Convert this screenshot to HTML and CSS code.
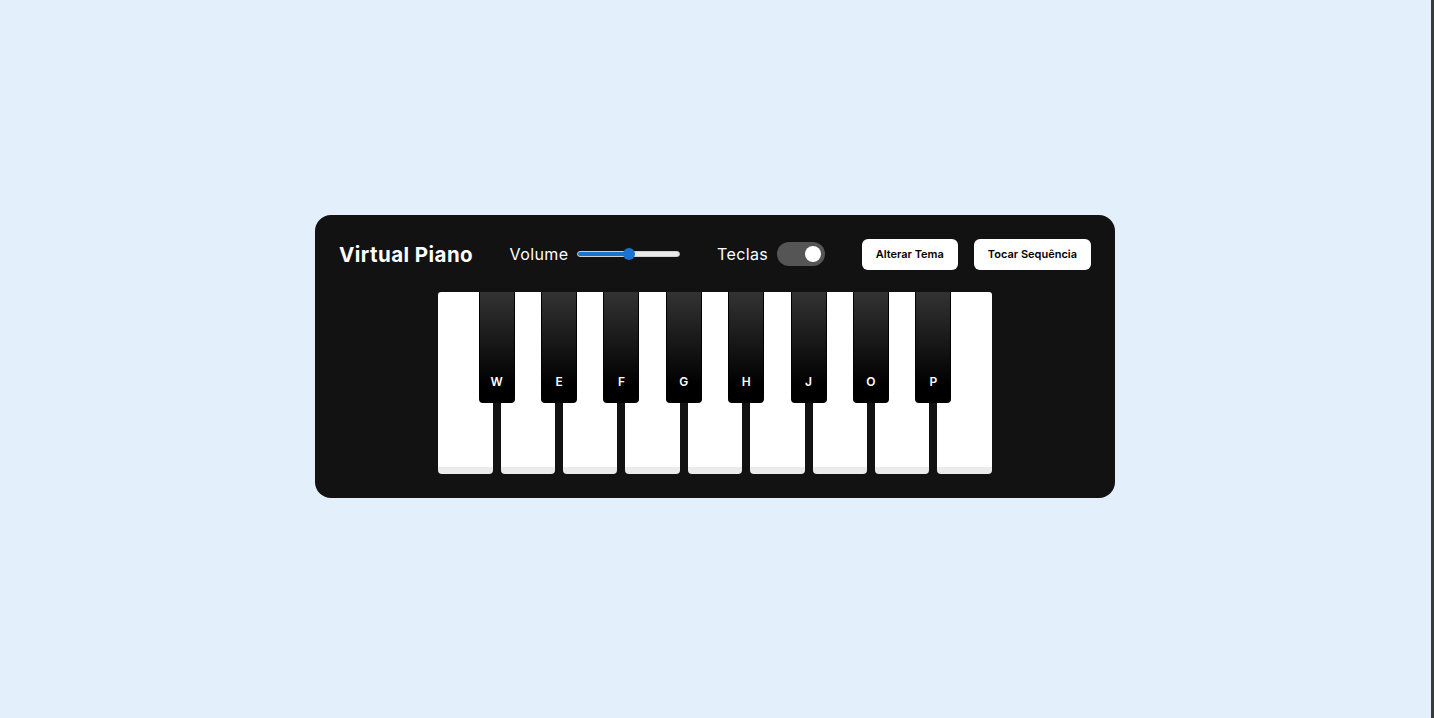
FILE: index.html
```html
<!DOCTYPE html>
<html lang="pt">
<head>
<meta charset="utf-8">
<title>Virtual Piano</title>
<link rel="stylesheet" href="styles.css">
</head>
<body>
<main class="piano-card">
  <header class="toolbar">
    <h1 class="title">Virtual Piano</h1>
    <label class="control">
      <span>Volume</span>
      <input class="volume" type="range" min="0" max="100" value="50">
    </label>
    <div class="control">
      <span>Teclas</span>
      <span class="toggle"><span class="knob"></span></span>
    </div>
    <div class="buttons">
      <button class="btn">Alterar Tema</button>
      <button class="btn">Tocar Sequência</button>
    </div>
  </header>
  <div class="keys">
    <div class="white"><div class="black"><span>W</span></div></div>
    <div class="white"><div class="black"><span>E</span></div></div>
    <div class="white"><div class="black"><span>F</span></div></div>
    <div class="white"><div class="black"><span>G</span></div></div>
    <div class="white"><div class="black"><span>H</span></div></div>
    <div class="white"><div class="black"><span>J</span></div></div>
    <div class="white"><div class="black"><span>O</span></div></div>
    <div class="white"><div class="black"><span>P</span></div></div>
    <div class="white"></div>
  </div>
</main>
</body>
</html>
```

FILE: styles.css
```css
* { box-sizing: border-box; }
html { background: #e3f0fb; }
body {
  margin: 0;
  min-height: 100vh;
  border-right: 3px solid #3a3a3a;
  background: #e3f0fb;
  display: flex;
  align-items: center;
  justify-content: center;
  font-family: Inter, "Open Sans", sans-serif;
  padding: 0 1px 6px 0;
}
.piano-card {
  width: 800px;
  background: #121212;
  border-radius: 16px;
  padding: 24px;
  display: flex;
  flex-direction: column;
  gap: 22px;
}
.toolbar {
  display: flex;
  align-items: center;
  justify-content: space-between;
  height: 31px;
}
.title {
  margin: 0;
  color: #fff;
  font-size: 20.5px;
  font-weight: 700;
  letter-spacing: 0.45px;
}
.control {
  display: flex;
  align-items: center;
  gap: 9px;
  color: #fff;
  font-size: 16px;
  letter-spacing: 0.4px;
}
.volume {
  -webkit-appearance: none;
  appearance: none;
  width: 103px;
  height: 12px;
  margin: 0;
  background: transparent;
}
.volume::-webkit-slider-runnable-track {
  height: 6px;
  border-radius: 3px;
  background: linear-gradient(to right, #1a73d0 0 50%, #e9e9e9 50% 100%);
  border: 1px solid #cfcfcf;
}
.volume::-webkit-slider-thumb {
  -webkit-appearance: none;
  width: 12px;
  height: 12px;
  border-radius: 50%;
  background: #1a73d0;
  margin-top: -4px;
}
.toggle {
  width: 48px;
  height: 24px;
  border-radius: 12px;
  background: #555;
  display: flex;
  align-items: center;
  justify-content: flex-end;
  padding: 0 4px;
}
.knob {
  width: 16px;
  height: 16px;
  border-radius: 50%;
  background: #fff;
}
.buttons { display: flex; gap: 16px; }
.btn {
  height: 31px;
  padding: 0 14px;
  border: none;
  border-radius: 6px;
  background: #fff;
  color: #000;
  font-family: inherit;
  font-size: 11px;
  font-weight: 600;
}
.keys {
  align-self: center;
  display: flex;
  gap: 8px;
}
.white {
  position: relative;
  width: 54.4px;
  height: 182px;
  background: #fff;
  border-radius: 3px 3px 4px 4px;
  border-bottom: 7px solid #ebebeb;
}
.black {
  position: absolute;
  top: 0;
  right: -22px;
  width: 36px;
  height: 111px;
  z-index: 1;
  background: linear-gradient(#333, #000 85%);
  border: 1px solid #000;
  border-top: none;
  border-radius: 0 0 4px 4px;
  display: flex;
  align-items: flex-end;
  justify-content: center;
  padding-bottom: 13px;
}
.black span {
  color: #fff;
  font-size: 12px;
  font-weight: 600;
}
```
